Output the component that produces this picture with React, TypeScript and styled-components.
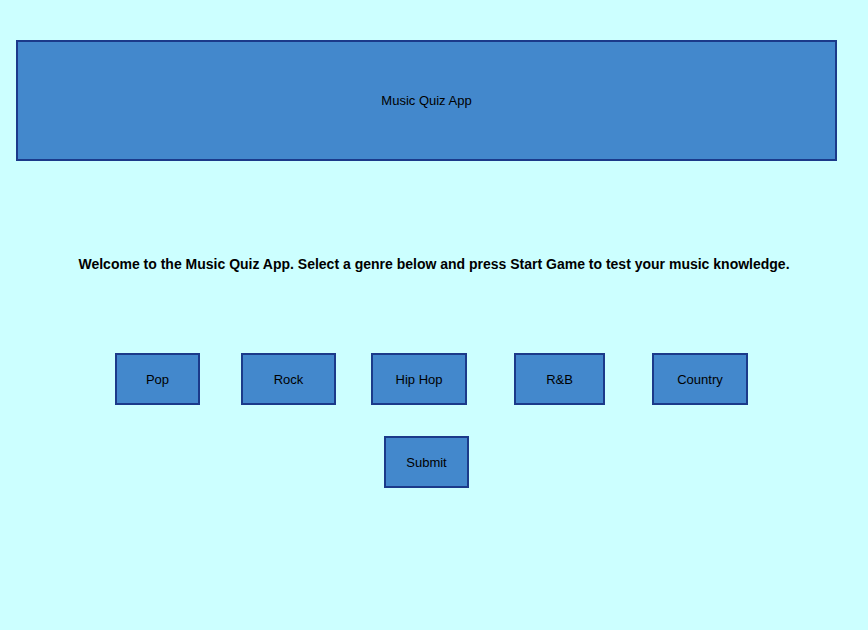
import styled, { createGlobalStyle } from 'styled-components';

const GlobalStyle = createGlobalStyle`
  html, body {
    margin: 0;
    padding: 0;
    background-color: #ccffff;
    font-family: 'Liberation Sans', Arial, sans-serif;
    color: #000;
  }
`;

const Page = styled.div`
  padding-top: 40px;
`;

const Header = styled.header`
  display: flex;
  align-items: center;
  justify-content: center;
  height: 117px;
  margin: 0 31px 0 16px;
  border: 2px solid #1b3a8a;
  background-color: #4388cc;
  font-size: 13px;
`;

const Welcome = styled.p`
  margin: 95px 0 0;
  text-align: center;
  font-size: 14px;
  font-weight: 700;
  line-height: 17px;
`;

const GenreRow = styled.div`
  display: flex;
  margin-top: 80px;
  padding-left: 115px;
`;

const Button = styled.button<{ $width: number; $gap?: number }>`
  box-sizing: border-box;
  width: ${p => p.$width}px;
  height: 52px;
  margin-left: ${p => p.$gap ?? 0}px;
  border: 2px solid #1b3a8a;
  background-color: #4388cc;
  font-family: 'Liberation Sans', Arial, sans-serif;
  font-size: 13px;
  color: #000;
  padding: 0;
  cursor: pointer;
`;

const SubmitRow = styled.div`
  display: flex;
  margin-top: 31px;
  padding-left: 384px;
`;

const genres = [
  { name: 'Pop', width: 85, gap: 0 },
  { name: 'Rock', width: 95, gap: 41 },
  { name: 'Hip Hop', width: 96, gap: 35 },
  { name: 'R&B', width: 91, gap: 47 },
  { name: 'Country', width: 96, gap: 47 },
];

const App = () => {
  return (
    <>
      <GlobalStyle />
      <Page>
        <Header>Music Quiz App</Header>
        <Welcome>
          Welcome to the Music Quiz App. Select a genre below and press Start Game to test your music knowledge.
        </Welcome>
        <GenreRow>
          {genres.map(g => (
            <Button key={g.name} $width={g.width} $gap={g.gap}>
              {g.name}
            </Button>
          ))}
        </GenreRow>
        <SubmitRow>
          <Button $width={85}>Submit</Button>
        </SubmitRow>
      </Page>
    </>
  );
};

export default App;
